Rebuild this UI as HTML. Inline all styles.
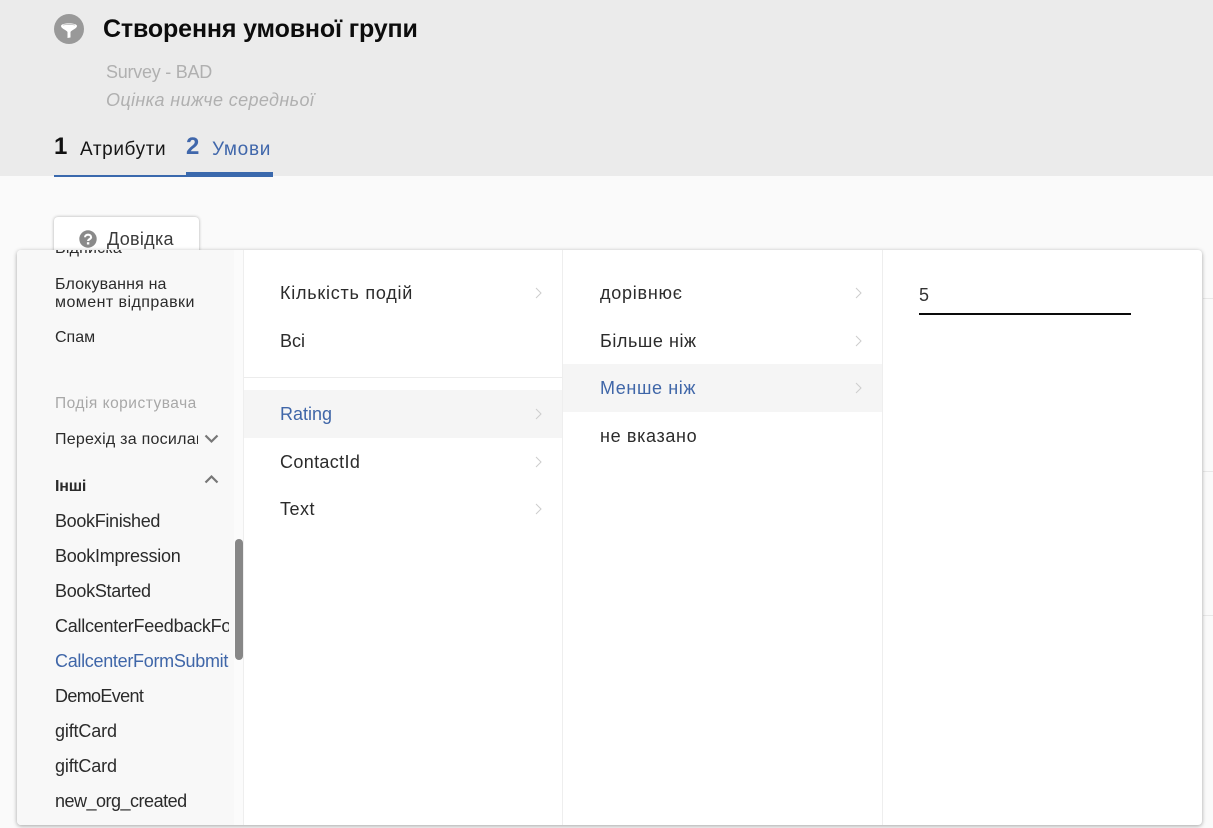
<!DOCTYPE html>
<html lang="uk"><head><meta charset="utf-8"><title>Створення умовної групи</title>
<style>
html,body{margin:0;padding:0}
body{width:1213px;height:828px;overflow:hidden;position:relative;background:#fafafa;font-family:"Liberation Sans",sans-serif;color:#222}
.t{position:absolute;white-space:nowrap;line-height:20px}
.b{position:absolute}
.f{font-size:18px;color:#2b2b2b}
.s{font-size:16px;color:#2b2b2b}
.blue{color:#3f66a8}
</style></head><body>
<div class="b" style="left:0;top:0;width:1213px;height:176px;background:#ebebeb"></div>
<svg class="b" style="left:54px;top:14px" width="30" height="30" viewBox="0 0 30 30"><circle cx="15" cy="15" r="15" fill="#999"/><path d="M7 12C7 8.5 23 8.5 23 12C23 14.5 17.5 16 16.5 18V23.5L13.5 24V18C12.5 16 7 14.5 7 12Z" fill="#fff"/><path d="M9 11.2C11 10.2 19 10.2 21 11.2" fill="none" stroke="#bbb" stroke-width=".8"/></svg>
<div class="t" style="left:103px;top:18px;font-size:25px;font-weight:bold;color:#0c0c0c;line-height:22px;letter-spacing:-.14px">Створення умовної групи</div>
<div class="t" style="left:106px;top:62px;font-size:18px;color:#b0b0b0;letter-spacing:-.25px">Survey - BAD</div>
<div class="t" style="left:106px;top:90px;font-size:18px;font-style:italic;color:#b0b0b0;letter-spacing:.37px">Оцінка нижче середньої</div>
<div class="t" style="left:54px;top:137px;font-size:24px;font-weight:bold;color:#111">1</div>
<div class="t" style="left:80px;top:140px;font-size:19px;color:#161616;letter-spacing:.6px">Атрибути</div>
<div class="t" style="left:186px;top:137px;font-size:24px;font-weight:bold;color:#4067ab">2</div>
<div class="t" style="left:212px;top:140px;font-size:19px;color:#4067ab;letter-spacing:.7px">Умови</div>
<div class="b" style="left:54px;top:175px;width:132px;height:2px;background:#3a69ad"></div>
<div class="b" style="left:186px;top:172px;width:87px;height:5px;background:#3a69ad"></div>

<div class="b" style="left:1203px;top:298px;width:10px;height:1px;background:#e8e8e8"></div>
<div class="b" style="left:1203px;top:471px;width:10px;height:1px;background:#e8e8e8"></div>
<div class="b" style="left:1203px;top:615px;width:10px;height:1px;background:#e8e8e8"></div>

<div class="b" style="left:54px;top:217px;width:145px;height:40px;background:#fff;border-radius:4px;box-shadow:0 0 3px rgba(0,0,0,.3)"></div>
<svg class="b" style="left:79px;top:230px" width="18" height="18" viewBox="0 0 18 18"><circle cx="9" cy="9" r="8.7" fill="#8a8a8a"/><path d="M6 7.2C6 3.8 12.1 3.8 12.1 7.2C12.1 9 9.1 9.2 9.1 11" fill="none" stroke="#fff" stroke-width="2.1"/><rect x="7.9" y="12.2" width="2.4" height="2.3" fill="#fff"/></svg>
<div class="t" style="left:107px;top:229px;font-size:18px;color:#3a3a3a;letter-spacing:.3px">Довідка</div>

<!-- panel -->
<div class="b" style="left:17px;top:250px;width:1185px;height:575px;background:#fff;border-radius:4px;box-shadow:0 1px 4px rgba(0,0,0,.35);overflow:hidden">
  <div class="b" style="left:0;top:0;width:217px;height:575px;background:#f8f8f8"></div>
  <div class="b" style="left:217px;top:0;width:9px;height:575px;background:#fbfbfb"></div>
  <div class="b" style="left:226px;top:0;width:1px;height:575px;background:#eee"></div>
  <div class="b" style="left:545px;top:0;width:1px;height:575px;background:#eee"></div>
  <div class="b" style="left:865px;top:0;width:1px;height:575px;background:#eee"></div>
  <div class="b" style="left:218px;top:289px;width:8px;height:121px;background:#878787;border-radius:4px"></div>
  <div class="b" style="left:227px;top:127px;width:318px;height:1px;background:#ececec"></div>
  <div class="b" style="left:227px;top:140px;width:318px;height:48px;background:#f5f5f5"></div>
  <div class="b" style="left:546px;top:114px;width:319px;height:48px;background:#f5f5f5"></div>
  <div class="t s" style="left:38px;top:-11px;letter-spacing:.2px">Відписка</div>
</div>

<div class="t s" style="left:55px;top:275px;letter-spacing:.15px">Блокування на</div>
<div class="t s" style="left:55px;top:293px;letter-spacing:.45px">момент відправки</div>
<div class="t s" style="left:55px;top:328px">Спам</div>
<div class="t" style="left:55px;top:394px;font-size:15.5px;color:#a8a8a8;letter-spacing:.5px">Подія користувача</div>
<div class="t s" style="left:55px;top:430px;width:143px;overflow:hidden;letter-spacing:.25px">Перехід за посилання</div>
<svg class="b" style="left:204px;top:434px" width="15" height="10" viewBox="0 0 15 10"><path d="M1.5 1.5L7.5 7.5L13.5 1.5" fill="none" stroke="#777" stroke-width="2.2"/></svg>
<div class="t" style="left:55px;top:477px;font-size:16px;font-weight:bold;color:#2b2b2b;letter-spacing:-.2px">Інші</div>
<svg class="b" style="left:204px;top:474px" width="15" height="10" viewBox="0 0 15 10"><path d="M1.5 8.5L7.5 2.5L13.5 8.5" fill="none" stroke="#777" stroke-width="2.2"/></svg>
<div class="t f" style="left:55px;top:511px;letter-spacing:-.33px">BookFinished</div>
<div class="t f" style="left:55px;top:546px;letter-spacing:-.25px">BookImpression</div>
<div class="t f" style="left:55px;top:581px;letter-spacing:-.3px">BookStarted</div>
<div class="t f" style="left:55px;top:616px;width:174px;overflow:hidden;letter-spacing:-.25px">CallcenterFeedbackForm</div>
<div class="t f blue" style="left:55px;top:651px;width:174px;overflow:hidden;letter-spacing:-.3px">CallcenterFormSubmit</div>
<div class="t f" style="left:55px;top:686px;letter-spacing:-.65px">DemoEvent</div>
<div class="t f" style="left:55px;top:721px;letter-spacing:-.15px">giftCard</div>
<div class="t f" style="left:55px;top:756px;letter-spacing:-.15px">giftCard</div>
<div class="t f" style="left:55px;top:791px;letter-spacing:-.5px">new_org_created</div>

<div class="t f" style="left:280px;top:283px;letter-spacing:.75px">Кількість подій</div>
<div class="t f" style="left:280px;top:331px">Всі</div>
<div class="t f blue" style="left:280px;top:404px">Rating</div>
<div class="t f" style="left:280px;top:452px;letter-spacing:.35px">ContactId</div>
<div class="t f" style="left:280px;top:499px;letter-spacing:.5px">Text</div>

<div class="t f" style="left:600px;top:283px;letter-spacing:.75px">дорівнює</div>
<div class="t f" style="left:600px;top:331px;letter-spacing:.55px">Більше ніж</div>
<div class="t f blue" style="left:600px;top:378px;letter-spacing:.6px">Менше ніж</div>
<div class="t f" style="left:600px;top:426px;letter-spacing:.65px">не вказано</div>

<svg class="b" style="left:0;top:0" width="1213" height="828" fill="none" stroke="#cdcdcd" stroke-width="1">
<path d="M536 288L541 293L536 298"/><path d="M536 409L541 414L536 419"/><path d="M536 457L541 462L536 467"/><path d="M536 504L541 509L536 514"/>
<path d="M856 288L861 293L856 298"/><path d="M856 336L861 341L856 346"/><path d="M856 383L861 388L856 393"/>
</svg>

<div class="t" style="left:919px;top:285px;font-size:18px;color:#333">5</div>
<div class="b" style="left:919px;top:313px;width:212px;height:2px;background:#0a0a0a"></div>
</body></html>
